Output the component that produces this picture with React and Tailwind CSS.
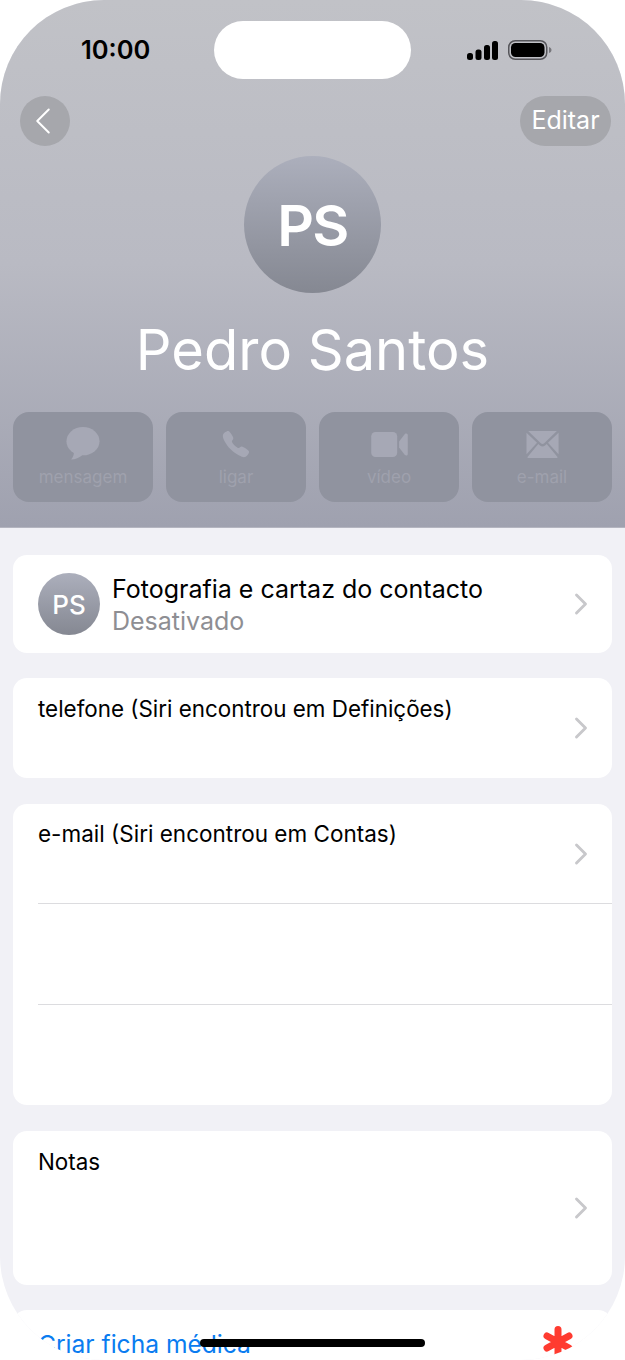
import { ChevronLeft, ChevronRight } from "lucide-react";
import { IoCall } from "react-icons/io5";

const font = { fontFamily: "Inter, 'Liberation Sans', sans-serif" };

function MessageIcon() {
  return (
    <svg width="36" height="34" viewBox="0 0 36 36" fill="currentColor">
      <ellipse cx="18" cy="15" rx="17.5" ry="15" />
      <path d="M8 24 C9 28 8 31 5.5 34.5 C10 34.5 14 32.5 18 29 Z" />
    </svg>
  );
}

function VideoIcon() {
  return (
    <svg width="37" height="25" viewBox="0 0 38 26" fill="currentColor">
      <rect x="0" y="0" width="27" height="26" rx="4.5" />
      <path d="M29 10 L35 2 C36.5 1 38 1.7 38 3.5 V22.5 C38 24.3 36.5 25 35 24 L29 16 Z" />
    </svg>
  );
}

function MailIcon() {
  return (
    <svg width="37" height="27" viewBox="0 0 38 32" fill="currentColor">
      <path d="M2 0 H36 L21 14.5 C19.8 15.6 18.2 15.6 17 14.5 Z" />
      <path d="M0 2 L12.5 14 L0 27.5 Z" />
      <path d="M38 2 L25.5 14 L38 27.5 Z" />
      <path d="M14 15.5 L16 17.2 C18 18.8 20 18.8 22 17.2 L24 15.5 L37 31 C36.5 31.7 36 32 35 32 H3 C2 32 1.5 31.7 1 31 Z" />
    </svg>
  );
}

function Action({ icon, label }) {
  return (
    <div className="flex h-[90px] w-[140px] flex-col items-center rounded-[16px] bg-[#90939f] text-[#a6a8b5]">
      <div className="mt-[14px] flex h-[36px] items-center justify-center">{icon}</div>
      <span className="mt-[2px] text-[17px] leading-[26px] text-[#9fa1ad]">{label}</span>
    </div>
  );
}

function Chevron({ className = "" }) {
  return <ChevronRight size={36} strokeWidth={1.9} className={"-mx-[4px] shrink-0 text-[#c8c8cb] " + className} />;
}

export default function App() {
  return (
    <div className="relative h-[1360px] w-[625px] overflow-hidden bg-white" style={font}>
      <div className="h-[1360px] overflow-hidden rounded-[104px] bg-[#f1f1f6]">
        {/* Cabecera */}
        <div className="relative h-[528px] border-b border-[#b4b5c0] bg-gradient-to-b from-[#c1c2c7] via-[#b9bac3] to-[#9fa1af]">
          <div className="absolute left-[214px] top-[21px] h-[58px] w-[197px] rounded-[29px] bg-white" />

          <div className="flex items-center justify-between pl-[81px] pr-[73px] pt-[34px]">
            <span className="text-[25.5px] font-semibold leading-[32px] text-black">10:00</span>
            <div className="flex items-center gap-[10px]">
              <svg width="31" height="19" viewBox="0 0 31 19" fill="black">
                <rect x="0" y="12" width="6" height="7" rx="2.5" />
                <rect x="8.5" y="8.5" width="6" height="10.5" rx="2.5" />
                <rect x="17" y="4" width="6" height="15" rx="2.5" />
                <rect x="25" y="0" width="6" height="19" rx="2.5" />
              </svg>
              <svg width="44" height="20" viewBox="0 0 44 20">
                <rect x="0.75" y="0.75" width="38" height="18.5" rx="6.5" fill="none" stroke="#55555a" strokeWidth="1.5" />
                <rect x="3" y="3" width="33.5" height="14" rx="4.5" fill="black" />
                <path d="M41 7 C42.5 7.5 43.5 8.5 43.5 10 C43.5 11.5 42.5 12.5 41 13 Z" fill="#77777c" />
              </svg>
            </div>
          </div>

          <div className="mt-[30px] flex items-center justify-between pl-[20px] pr-[14px]">
            <div className="flex h-[50px] w-[50px] items-center justify-center rounded-full bg-[#a6a7ac]">
              <ChevronLeft size={46} strokeWidth={1.05} className="mr-[4px] shrink-0 text-white" />
            </div>
            <div className="flex h-[50px] w-[91px] items-center justify-center rounded-full bg-[#a6a7ac] text-[25px] text-white">
              Editar
            </div>
          </div>

          <div className="mx-auto mt-[10px] flex h-[137px] w-[137px] items-center justify-center rounded-full bg-gradient-to-b from-[#acafbc] to-[#858892] pt-[3px] text-[57px] font-semibold tracking-[-0.03em] text-white">
            PS
          </div>

          <h1 className="mt-[22px] text-center text-[56px] font-normal leading-[70px] text-white">Pedro Santos</h1>

          <div className="mt-[27px] flex justify-between px-[13px]">
            <Action icon={<MessageIcon />} label="mensagem" />
            <Action icon={<IoCall size={30} />} label="ligar" />
            <Action icon={<VideoIcon />} label="vídeo" />
            <Action icon={<MailIcon />} label="e-mail" />
          </div>
        </div>

        {/* Lista */}
        <div className="flex flex-col gap-[25px] px-[13px] pt-[27px]">
          <div className="flex h-[98px] items-center rounded-[14px] bg-white pl-[25px] pr-[17px]">
            <div className="flex h-[62px] w-[62px] shrink-0 items-center justify-center rounded-full bg-gradient-to-b from-[#acafbc] to-[#858892] text-[26px] font-medium text-white">
              PS
            </div>
            <div className="ml-[12px] flex-1 pt-[2px]">
              <div className="text-[25px] leading-[32px] text-black">Fotografia e cartaz do contacto</div>
              <div className="text-[25px] leading-[32px] text-[#8e8e93]">Desativado</div>
            </div>
            <Chevron />
          </div>

          <div className="flex h-[100px] justify-between rounded-[14px] bg-white pl-[25px] pr-[17px]">
            <span className="pt-[17px] text-[22.4px] leading-[28px] text-black">telefone (Siri encontrou em Definições)</span>
            <Chevron className="self-center" />
          </div>

          <div className="mt-[1px] flex h-[301px] flex-col rounded-[14px] bg-white pl-[25px]">
            <div className="flex h-[100px] justify-between border-b border-[#dcdcdf] pr-[17px]">
              <span className="pt-[16px] text-[22.5px] leading-[28px] text-black">e-mail (Siri encontrou em Contas)</span>
              <Chevron className="self-center" />
            </div>
            <div className="h-[101px] border-b border-[#dcdcdf]" />
          </div>

          <div className="mt-[1px] flex h-[154px] justify-between rounded-[14px] bg-white pl-[25px] pr-[17px]">
            <span className="pt-[17px] text-[22.4px] leading-[28px] text-black">Notas</span>
            <Chevron className="self-center" />
          </div>

          <div className="flex h-[100px] justify-between rounded-[14px] bg-white pl-[25px] pr-[37px]">
            <span className="pt-[18px] text-[24.6px] leading-[32px] text-[#0a7cf0]">Criar ficha médica</span>
            <svg width="34" height="32" viewBox="0 0 34 32" className="mt-[16px]" stroke="#ff3b30" strokeWidth="7" strokeLinecap="round">
              <path d="M17 3.5 V28.5 M6 10 L28 22 M28 10 L6 22" />
            </svg>
          </div>
        </div>
      </div>

      {/* Indicador de inicio */}
      <div className="absolute left-[200px] top-[1339px] h-[8px] w-[225px] rounded-full bg-black" />
    </div>
  );
}
